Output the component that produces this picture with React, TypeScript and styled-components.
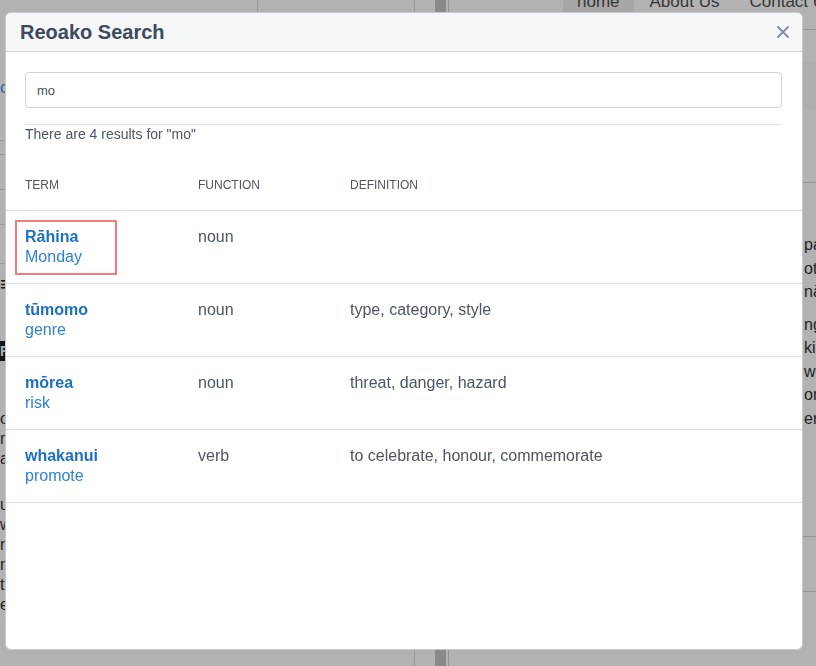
import styled, { createGlobalStyle } from 'styled-components';

const GlobalStyle = createGlobalStyle`
  html, body {
    margin: 0;
    padding: 0;
  }
  body {
    font-family: "Liberation Sans", Arial, sans-serif;
    overflow: hidden;
  }
`;

type Entry = {
  term: string;
  english: string;
  fn: string;
  definition: string;
};

const results: Entry[] = [
  { term: 'Rāhina', english: 'Monday', fn: 'noun', definition: '' },
  { term: 'tūmomo', english: 'genre', fn: 'noun', definition: 'type, category, style' },
  { term: 'mōrea', english: 'risk', fn: 'noun', definition: 'threat, danger, hazard' },
  {
    term: 'whakanui',
    english: 'promote',
    fn: 'verb',
    definition: 'to celebrate, honour, commemorate',
  },
];

function BackgroundPage() {
  return (
    <Page>
      <LeftCol>
        <LeftTop>
          <Brand />
        </LeftTop>
        <SideLink $blue>co</SideLink>
        <SideRule $gap={42} />
        <SideRule $gap={13} />
        <SideRule $gap={34} />
        <SideRule $gap={34} />
        <SideRule $gap={38} />
        <MenuGlyph>≡</MenuGlyph>
        <DarkTag>R</DarkTag>
        <SideText $gap={48}>
          o<br />m<br />a
        </SideText>
        <SideText $gap={26}>
          u<br />w<br />n<br />n<br />t<br />e
        </SideText>
      </LeftCol>
      <Gutter />
      <ScrollStrip />
      <RightCol>
        <Nav>
          <NavLink $active>home</NavLink>
          <NavLink>About Us</NavLink>
          <NavLink>Contact Us</NavLink>
        </Nav>
        <SearchBand />
        <RightBlock />
        <RightPara $gap={50}>
          <span>pa</span>
          <span>ot</span>
          <span>nā</span>
        </RightPara>
        <RightPara $gap={9}>
          <span>ng</span>
          <span>ki</span>
          <span>wa</span>
          <span>ore</span>
          <span>en</span>
        </RightPara>
        <RightRule $gap={106} />
        <RightRule $gap={54} />
      </RightCol>
    </Page>
  );
}

function CloseIcon() {
  return (
    <svg width="12" height="12" viewBox="0 0 12 12" aria-hidden="true">
      <path d="M1 1L11 11M11 1L1 11" stroke="#848d9a" strokeWidth="1.8" strokeLinecap="round" />
    </svg>
  );
}

function SearchModal() {
  return (
    <Overlay>
      <Modal>
        <Header>
          <Title>Reoako Search</Title>
          <CloseButton aria-label="Close">
            <CloseIcon />
          </CloseButton>
        </Header>
        <Body>
          <SearchInput defaultValue="mo" />
          <Divider />
          <Summary>There are 4 results for "mo"</Summary>
          <Table>
            <HeadCell>Term</HeadCell>
            <HeadCell>Function</HeadCell>
            <HeadCell>Definition</HeadCell>
            {results.map((r, i) => (
              <Row key={r.term}>
                <Cell>
                  <TermLink $focused={i === 0}>
                    <TermName>{r.term}</TermName>
                    <TermEnglish>{r.english}</TermEnglish>
                  </TermLink>
                </Cell>
                <Cell>{r.fn}</Cell>
                <Cell>{r.definition}</Cell>
              </Row>
            ))}
          </Table>
        </Body>
      </Modal>
    </Overlay>
  );
}

export default function App() {
  return (
    <>
      <GlobalStyle />
      <BackgroundPage />
      <SearchModal />
    </>
  );
}

/* background page (sits under the overlay) */

const Page = styled.div`
  display: flex;
  width: 816px;
  height: 666px;
  overflow: hidden;
  background: #fff;
  color: #4a4a4a;
  font-size: 16px;
`;
const LeftCol = styled.div`
  width: 414px;
  flex: none;
  display: flex;
  flex-direction: column;
  border-right: 1px solid #d6d9de;
`;
const LeftTop = styled.div`
  height: 30px;
  display: flex;
`;
const Brand = styled.div`
  width: 257px;
  border-right: 1px solid #d6d9de;
`;
const SideLink = styled.div<{ $blue?: boolean }>`
  margin-top: 48px;
  line-height: 20px;
  color: ${({ $blue }) => ($blue ? '#3f8fe0' : '#4a4a4a')};
`;
const SideRule = styled.div<{ $gap: number }>`
  margin-top: ${({ $gap }) => $gap}px;
  border-top: 1px solid #d6d9de;
`;
const MenuGlyph = styled.div`
  margin-top: 10px;
  line-height: 20px;
  font-size: 20px;
  font-weight: bold;
  color: #222;
`;
const DarkTag = styled.div`
  margin-top: 47px;
  width: 40px;
  height: 20px;
  background: #1c1c1c;
  color: #fff;
  line-height: 20px;
  font-weight: bold;
  font-size: 14px;
`;
const SideText = styled.div<{ $gap: number }>`
  margin-top: ${({ $gap }) => $gap}px;
  line-height: 20px;
  color: #333;
`;
const Gutter = styled.div`
  width: 20px;
  flex: none;
`;
const ScrollStrip = styled.div`
  width: 11px;
  flex: none;
  background: #c4c4c4;
  border-right: 2px solid #fff;
  box-shadow: 1px 0 0 #d0d4da;
`;
const RightCol = styled.div`
  flex: 1;
  min-width: 0;
  display: flex;
  flex-direction: column;
  border-left: 1px solid #d0d4da;
`;
const Nav = styled.nav`
  margin-top: -12px;
  height: 42px;
  box-sizing: border-box;
  padding-left: 114px;
  display: flex;
  gap: 2px;
  border-bottom: 1px solid #d6d9de;
`;
const NavLink = styled.span<{ $active?: boolean }>`
  flex: none;
  white-space: nowrap;
  padding: 0 14px;
  height: 26px;
  line-height: 28px;
  font-size: 17px;
  color: #4f4f4f;
  background: ${({ $active }) => ($active ? '#f0f0f0' : 'transparent')};
`;
const SearchBand = styled.div`
  margin-top: 32px;
  height: 47px;
  background: #fafafa;
`;
const RightBlock = styled.div`
  height: 73px;
  border-bottom: 1px solid #d6d9de;
`;
const RightPara = styled.div<{ $gap: number }>`
  margin-top: ${({ $gap }) => $gap}px;
  padding-left: 355px;
  display: flex;
  flex-direction: column;
  line-height: 23.5px;
  color: #333;
`;
const RightRule = styled.div<{ $gap: number }>`
  margin-top: ${({ $gap }) => $gap}px;
  border-top: 1px solid #d0d4da;
`;

/* modal */

const Overlay = styled.div`
  position: fixed;
  inset: 0;
  background: rgba(0, 0, 0, 0.3);
  display: flex;
  align-items: flex-start;
  padding: 12px 0 0 5px;
`;
const Modal = styled.div`
  width: 798px;
  height: 638px;
  box-sizing: border-box;
  background: #fff;
  border: 1px solid #c3c9d2;
  border-radius: 6px;
  overflow: hidden;
  display: flex;
  flex-direction: column;
`;
const Header = styled.div`
  height: 39px;
  flex: none;
  box-sizing: border-box;
  padding: 0 13px 0 14px;
  display: flex;
  align-items: center;
  justify-content: space-between;
  background: #f5f7f9;
  border-bottom: 1px solid #d3d8df;
`;
const Title = styled.h2`
  margin: 0;
  font-size: 20px;
  font-weight: bold;
  color: #3d4a5e;
`;
const CloseButton = styled.button`
  border: none;
  background: none;
  padding: 0;
  display: flex;
  cursor: pointer;
`;
const Body = styled.div`
  padding: 20px 20px 0 19px;
  display: flex;
  flex-direction: column;
`;
const SearchInput = styled.input`
  height: 36px;
  box-sizing: border-box;
  border: 1px solid #cdd3db;
  border-radius: 4px;
  padding: 0 11px;
  font-family: "Liberation Sans", Arial, sans-serif;
  font-size: 13px;
  color: #4a4f58;
  outline: none;
`;
const Divider = styled.hr`
  margin: 16px 0 0;
  border: none;
  border-top: 1px solid #dde1e6;
`;
const Summary = styled.p`
  margin: 0;
  font-size: 14px;
  line-height: 18px;
  color: #4b5565;
`;
const Table = styled.div`
  margin: 17px -20px 0 -19px;
  display: grid;
  grid-template-columns: 173px 152px 1fr;
`;
const HeadCell = styled.div`
  padding: 16px 19px;
  font-size: 12px;
  line-height: 18px;
  text-transform: uppercase;
  color: #4b5565;
  border-bottom: 1px solid #dde1e6;
`;
const Row = styled.div`
  display: contents;
`;
const Cell = styled.div`
  padding: 16px 19px;
  font-size: 16px;
  line-height: 20px;
  color: #4b5565;
  border-bottom: 1px solid #dde1e6;
`;
const TermLink = styled.a<{ $focused?: boolean }>`
  display: block;
  width: 82px;
  margin: -5px -8px -6px;
  padding: 5px 8px 6px;
  outline: ${({ $focused }) => ($focused ? '2px solid #f47b7b' : 'none')};
  text-decoration: none;
  cursor: pointer;
`;
const TermName = styled.div`
  font-weight: bold;
  color: #1b70c4;
`;
const TermEnglish = styled.div`
  color: #2e80d2;
`;
